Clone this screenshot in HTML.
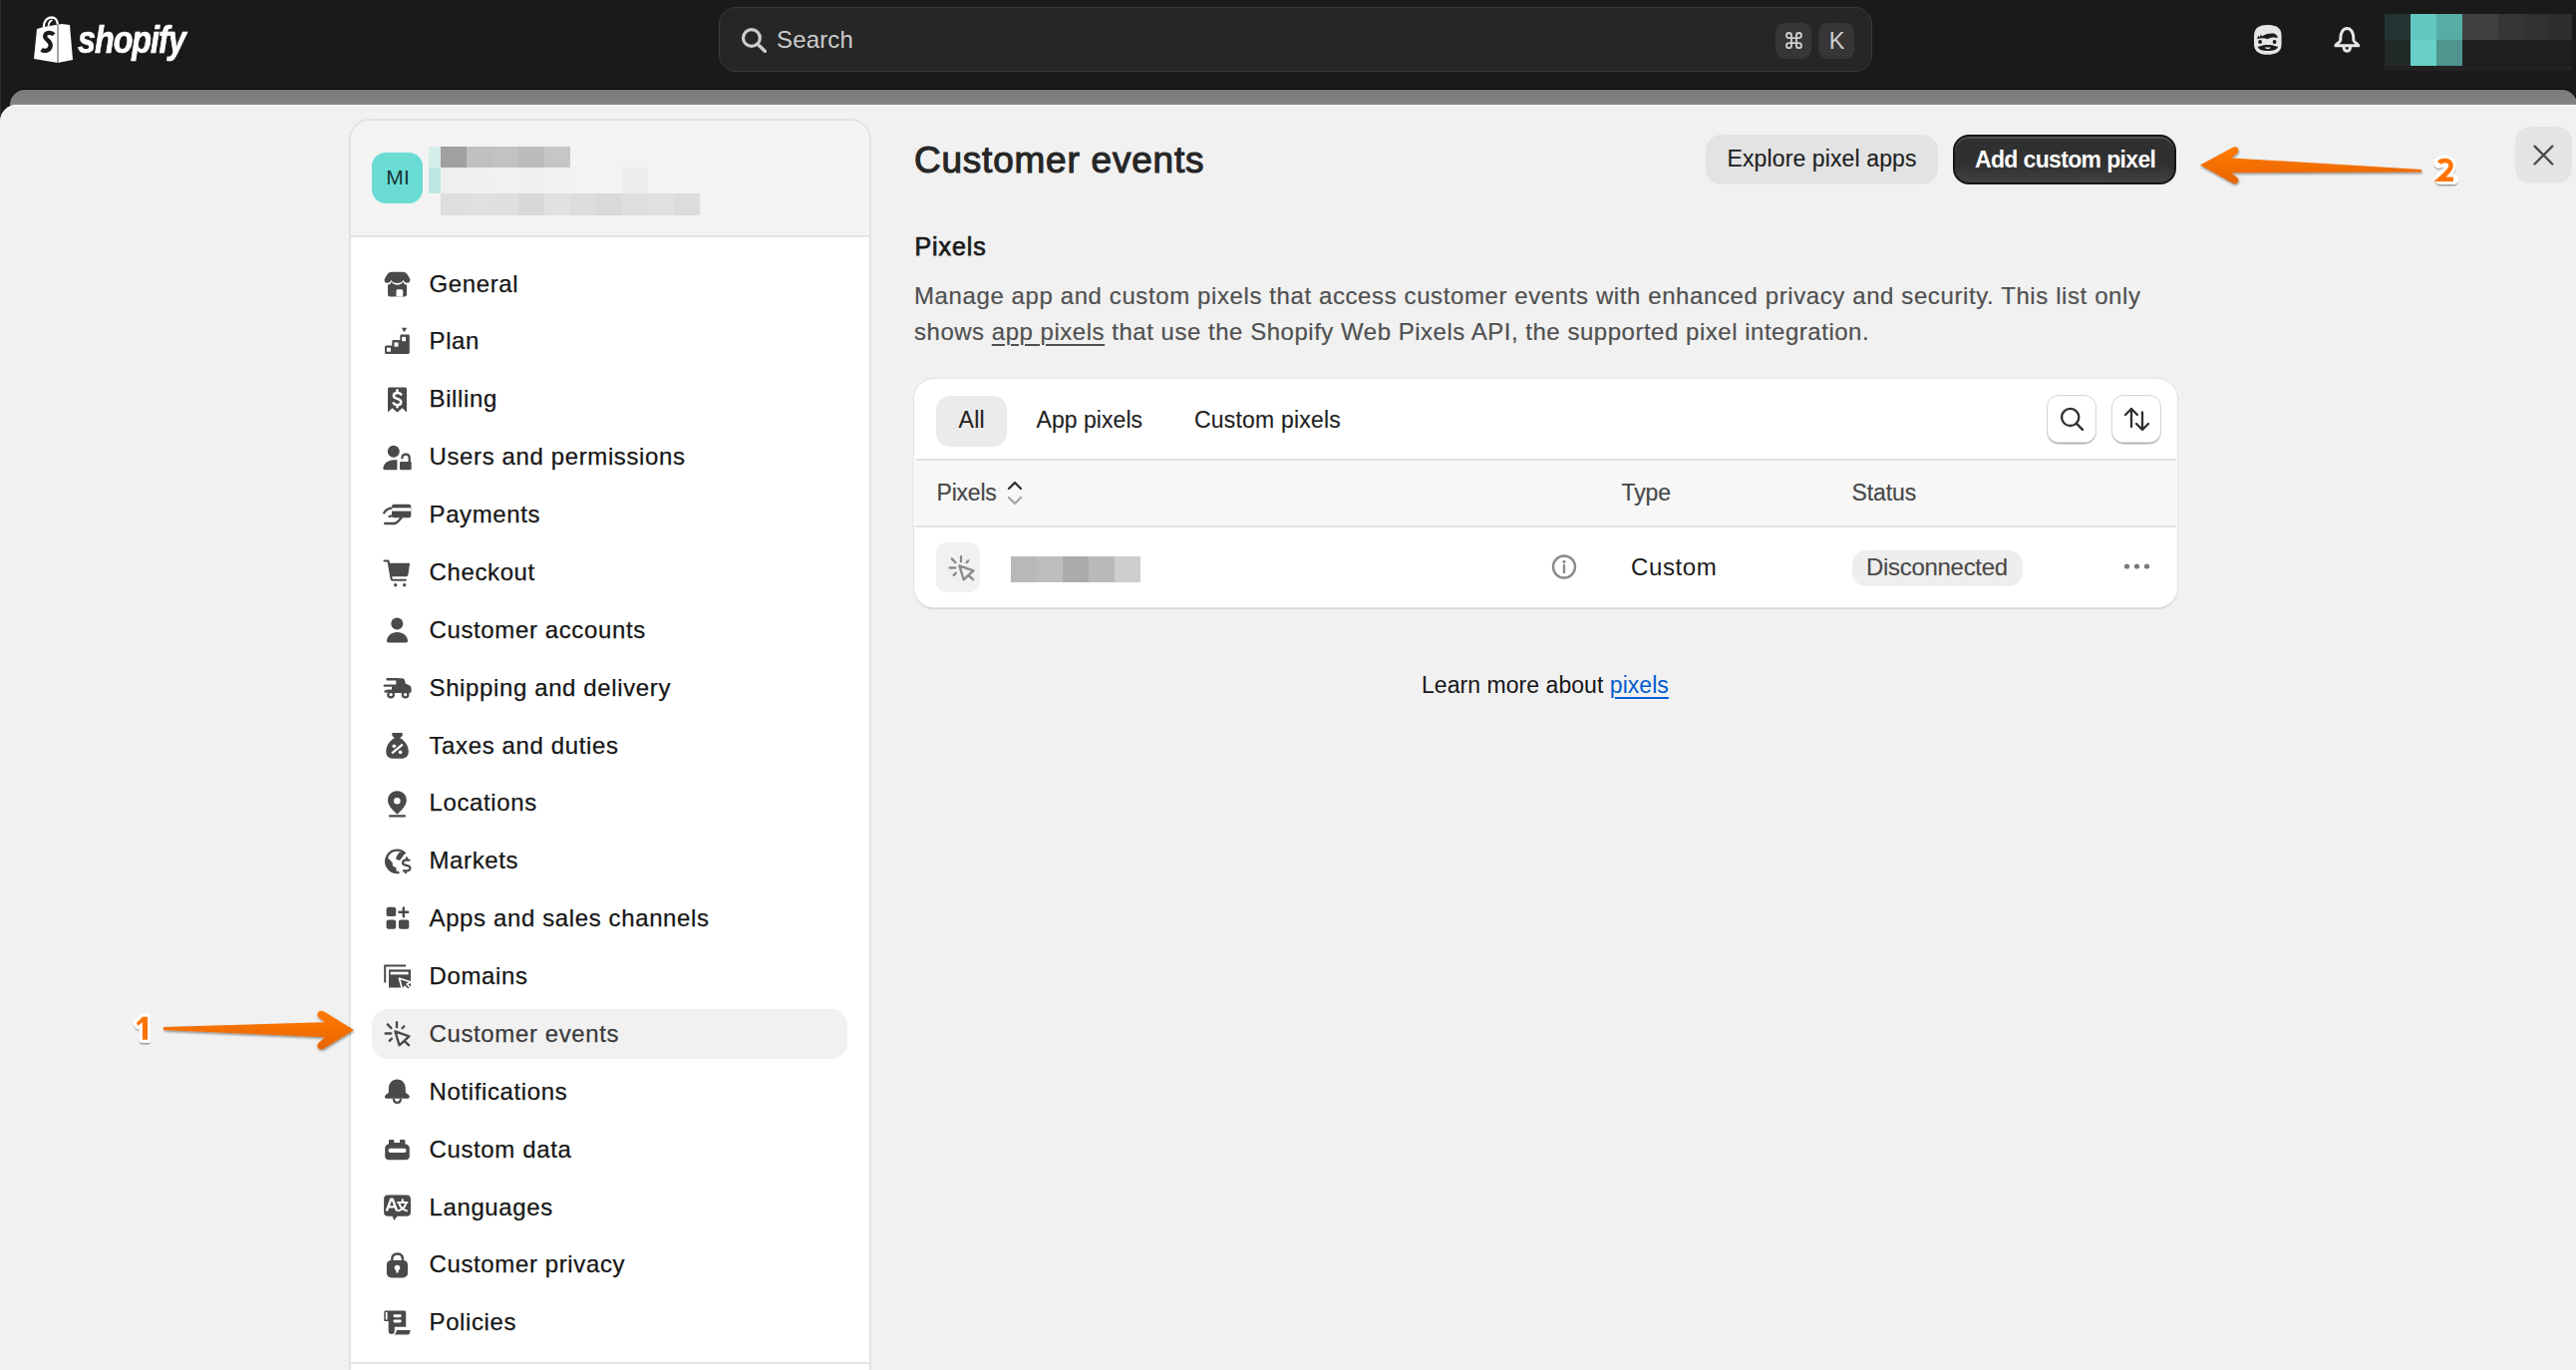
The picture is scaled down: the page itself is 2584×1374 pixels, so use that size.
<!DOCTYPE html>
<html><head><meta charset="utf-8"><title>Customer events</title>
<style>
*{margin:0;padding:0;box-sizing:border-box}
html,body{width:2584px;height:1374px;overflow:hidden;background:#f1f1f1}
body{position:relative;font-family:"Liberation Sans",sans-serif}
.t{position:absolute;white-space:nowrap}
.blk{position:absolute}
#topbar{position:absolute;left:0;top:0;width:2584px;height:130px;background:#1a1a1a}
#leftedge{position:absolute;left:0;top:0;width:1px;height:118px;background:#2c2c2c}
#search{position:absolute;left:721px;top:7px;width:1157px;height:65px;background:#262626;border:1.5px solid #3a3a3a;border-radius:17px}
.key{position:absolute;top:23px;width:36px;height:36px;background:#363636;border-radius:9px}
#band{position:absolute;left:10px;top:89.5px;width:2575px;height:20px;background:linear-gradient(#7a7a7a,#888888);border-radius:15px 15px 0 0;box-shadow:0 -1px 0 #050505}
#main{position:absolute;left:0;top:104.5px;width:2584px;height:1270px;background:#f1f1f1;border-radius:17px 0 0 0;box-shadow:inset 0 1.5px 0 #f6f6f6}
#side{position:absolute;left:350px;top:119px;width:524px;height:1300px;background:#fff;border:2px solid #e2e2e2;border-radius:21px}
#sidehead{position:absolute;left:352px;top:121px;width:520px;height:117px;background:#f3f3f3;border-bottom:2px solid #e3e3e3;border-radius:19px 19px 0 0}
#avatar{position:absolute;left:373px;top:153px;width:51px;height:51px;background:#6adcd4;border-radius:14px}
#selitem{position:absolute;left:373px;top:1012px;width:477px;height:50px;background:#f1f1f1;border-radius:16px}
.btn2{position:absolute;background:#e3e3e3;border-radius:16px}
.btn1{position:absolute;background:linear-gradient(#303030 0%,#303030 60%,#424242 100%);border:2px solid #161616;border-radius:16px;box-shadow:inset 0 2px 0 #505050}
.closebtn{position:absolute;left:2523px;top:127px;width:57px;height:57px;background:#e4e4e4;border-radius:15px}
#card{position:absolute;left:917px;top:380px;width:1267px;height:229px;background:#fff;border-radius:20px;box-shadow:0 0 0 1.2px #e4e4e4,0 2px 1px #d0d0d0}
.tabsel{position:absolute;left:939px;top:397px;width:71px;height:51px;background:#ebebeb;border-radius:14px}
.ibtn{position:absolute;top:396px;width:50px;height:49.5px;background:#fff;border:1.5px solid #d6d6d6;border-radius:12px;box-shadow:inset 0 -1.5px 0 #b5b5b5}
.hdrrow{position:absolute;left:918px;top:460px;width:1265px;height:69px;background:#f7f7f7;border-top:2px solid #e3e3e3;border-bottom:2px solid #e3e3e3}
.rowsep{display:none}
.rowicon{position:absolute;left:939px;top:543.5px;width:44px;height:50px;background:#f1f1f1;border-radius:10px}
.badge{position:absolute;left:1858px;top:552px;width:171px;height:36px;background:#eeeeee;border-radius:14px}
u.ul{text-decoration:underline;text-decoration-thickness:1.5px;text-underline-offset:4px}
u.lnk{color:#005bd3;text-decoration:underline;text-decoration-thickness:2px;text-underline-offset:4px}
.lbl{text-shadow:0 0 2px #fff,1.5px 0 0 #fff,-1.5px 0 0 #fff,0 1.5px 0 #fff,0 -1.5px 0 #fff,1.5px 1.5px 0 #fff,-1.5px -1.5px 0 #fff,1.5px -1.5px 0 #fff,-1.5px 1.5px 0 #fff,0 3px 1px rgba(0,0,0,.35);-webkit-text-stroke:0}
</style></head>
<body>
<div id="topbar"></div>
<div id="leftedge"></div>
<svg id="logo-bag" width="42" height="48" viewBox="0 0 42 48" style="position:absolute;left:32px;top:16px">
<path d="M11.8 11.5 C11.8 5 15.5 1.5 19.5 1.5 C23.5 1.5 25.8 4.5 25.8 8.5" stroke="#fff" stroke-width="2.3" fill="none"/>
<path d="M16.5 10 C17 6.5 18.5 4.5 20.5 4.5" stroke="#fff" stroke-width="1.8" fill="none"/>
<path d="M5 13 L12 11 L30 8 L38 9 L41 44 L26 47 L2 43 Z" fill="#fff"/>
<path d="M26 9 L26 47" stroke="#1a1a1a" stroke-width="0.8"/>
<path d="M22 18.8 C19.5 16.2 14.2 16.2 13.2 19.8 C12.2 23.6 19.2 24.8 18.7 29.8 C18.2 34.5 13 36.2 9.6 33.8" stroke="#1a1a1a" stroke-width="4.3" fill="none"/>
</svg>
<div class="t logo" style="left:77.50px;top:20.83px;font-size:38px;line-height:38px;color:#ffffff;font-weight:700;letter-spacing:-1.2px;font-style:italic;transform:scaleX(0.85);transform-origin:0 0;-webkit-text-stroke:0.7px #fff;">shopify</div>
<div id="search"></div>
<svg width="30" height="30" viewBox="0 0 30 30" style="position:absolute;left:739px;top:23px">
<circle cx="14.9" cy="15" r="8.4" stroke="#cccccc" stroke-width="3.2" fill="none"/>
<path d="M21 21.2 L28.5 28.4" stroke="#cccccc" stroke-width="3.4" stroke-linecap="round"/></svg>
<div class="t " style="left:779.00px;top:27.88px;font-size:24px;line-height:24px;color:#cccccc;font-weight:400;letter-spacing:0.15px;">Search</div>
<div class="key" style="left:1781px"></div>
<div class="key" style="left:1824px"></div>
<svg width="15" height="15.2" viewBox="3 3 18 18" preserveAspectRatio="none" style="position:absolute;left:1792px;top:32.7px;overflow:visible">
<path d="M18 3a3 3 0 0 0-3 3v12a3 3 0 0 0 3 3 3 3 0 0 0 3-3 3 3 0 0 0-3-3H6a3 3 0 0 0-3 3 3 3 0 0 0 3 3 3 3 0 0 0 3-3V6a3 3 0 0 0-3-3 3 3 0 0 0-3 3 3 3 0 0 0 3 3h12a3 3 0 0 0 3-3 3 3 0 0 0-3-3z" stroke="#cfcfcf" stroke-width="2.2" fill="none"/></svg>
<div class="t " style="left:1834.80px;top:29.81px;font-size:23.5px;line-height:23.5px;color:#cfcfcf;font-weight:400;letter-spacing:0px;">K</div>
<svg width="30" height="32" viewBox="0 0 30 32" style="position:absolute;left:2260px;top:24px">
<path d="M1 12 C1 4 6 0.9 14.8 0.9 C23.6 0.9 28.6 4 28.6 12 L28.6 20 C28.6 27.5 23.6 30.8 14.8 30.8 C6 30.8 1 27.5 1 20 Z" fill="#e6e6e6"/>
<path d="M3.9 15 L5.5 11.5 L6.5 13.5 L8 10.5 L9 12.5 C12 10 17 9 21 9.5 C23 10 24.5 12 25 14 C21 13 17.5 13.5 14.5 15.2 C12 14 8 14 3.9 15 Z" fill="#1a1a1a"/>
<circle cx="7.1" cy="18" r="1.9" fill="#1a1a1a"/><circle cx="21.6" cy="18" r="1.9" fill="#1a1a1a"/>
<path d="M4.75 23 C8 21.5 11.5 20.9 14.8 20.9 C18 20.9 21.5 21.5 25.1 23 C24 26 20 27 14.8 27 C9.5 27 5.8 26 4.75 23 Z" fill="#1a1a1a"/>
<path d="M11.8 23.5 C12.5 25.8 17 25.8 17.8 23.5 Z" fill="#e6e6e6"/>
</svg>
<svg width="30" height="30" viewBox="0 0 30 30" style="position:absolute;left:2340px;top:26px">
<path d="M7.8 12.5 C7.8 6.2 10.6 2.4 14.3 2.4 C18 2.4 20.8 6.2 20.8 12.5 L20.8 14.2 C20.8 16.6 25.8 17.6 25.8 19.8 L2.8 19.8 C2.8 17.6 7.8 16.6 7.8 14.2 Z" stroke="#e6e6e6" stroke-width="3" fill="none" stroke-linejoin="round"/>
<path d="M11 20.5 C11 26.8 17.6 26.8 17.6 20.5" stroke="#e6e6e6" stroke-width="3" fill="none"/>
</svg>
<div class="blk" style="left:2392px;top:14px;width:26px;height:26px;background:#243433"></div>
<div class="blk" style="left:2418px;top:14px;width:26px;height:26px;background:#64c8c0"></div>
<div class="blk" style="left:2444px;top:14px;width:26px;height:26px;background:#58aca6"></div>
<div class="blk" style="left:2470px;top:14px;width:36px;height:26px;background:#404040"></div>
<div class="blk" style="left:2506px;top:14px;width:26px;height:26px;background:#363636"></div>
<div class="blk" style="left:2532px;top:14px;width:26px;height:26px;background:#313131"></div>
<div class="blk" style="left:2558px;top:14px;width:22px;height:26px;background:#2e2e2e"></div>
<div class="blk" style="left:2392px;top:40px;width:26px;height:26px;background:#222a29"></div>
<div class="blk" style="left:2418px;top:40px;width:26px;height:26px;background:#68d0c8"></div>
<div class="blk" style="left:2444px;top:40px;width:26px;height:26px;background:#4f948e"></div>
<div class="blk" style="left:2470px;top:40px;width:110px;height:26px;background:#1e1e1e"></div>
<div class="blk" style="left:2392px;top:66px;width:188px;height:5px;background:#222222"></div>
<div id="band"></div>
<div id="main"></div>
<div id="side"></div>
<div id="sidehead"></div>
<div id="avatar"></div>
<div class="t " style="left:387.30px;top:167.42px;font-size:21px;line-height:21px;color:#163533;font-weight:400;letter-spacing:0.3px;">MI</div>
<div class="blk" style="left:430px;top:147px;width:12px;height:21px;background:#d6eeeb"></div>
<div class="blk" style="left:442px;top:147px;width:26px;height:21px;background:#a0a0a0"></div>
<div class="blk" style="left:468px;top:147px;width:26px;height:21px;background:#c0c0c0"></div>
<div class="blk" style="left:494px;top:147px;width:26px;height:21px;background:#c2c2c2"></div>
<div class="blk" style="left:520px;top:147px;width:26px;height:21px;background:#bcbcbc"></div>
<div class="blk" style="left:546px;top:147px;width:26px;height:21px;background:#c6c6c6"></div>
<div class="blk" style="left:430px;top:168px;width:12px;height:26px;background:#bce7e2"></div>
<div class="blk" style="left:442px;top:168px;width:26px;height:26px;background:#efefef"></div>
<div class="blk" style="left:468px;top:168px;width:26px;height:26px;background:#f0f0f0"></div>
<div class="blk" style="left:494px;top:168px;width:26px;height:26px;background:#f1f1f1"></div>
<div class="blk" style="left:520px;top:168px;width:26px;height:26px;background:#f0f0f0"></div>
<div class="blk" style="left:546px;top:168px;width:26px;height:26px;background:#f1f1f1"></div>
<div class="blk" style="left:624px;top:168px;width:26px;height:26px;background:#ececec"></div>
<div class="blk" style="left:442px;top:194px;width:26px;height:22px;background:#dedede"></div>
<div class="blk" style="left:468px;top:194px;width:26px;height:22px;background:#e0e0e0"></div>
<div class="blk" style="left:494px;top:194px;width:26px;height:22px;background:#dfdfdf"></div>
<div class="blk" style="left:520px;top:194px;width:26px;height:22px;background:#d8d8d8"></div>
<div class="blk" style="left:546px;top:194px;width:26px;height:22px;background:#e1e1e1"></div>
<div class="blk" style="left:572px;top:194px;width:26px;height:22px;background:#dddddd"></div>
<div class="blk" style="left:598px;top:194px;width:26px;height:22px;background:#d9d9d9"></div>
<div class="blk" style="left:624px;top:194px;width:26px;height:22px;background:#dedede"></div>
<div class="blk" style="left:650px;top:194px;width:26px;height:22px;background:#e0e0e0"></div>
<div class="blk" style="left:676px;top:194px;width:26px;height:22px;background:#dcdcdc"></div>
<div id="selitem"></div>
<svg width="30" height="30" viewBox="0 0 30 30" style="position:absolute;left:384px;top:270.90px;overflow:visible"><path d="M8.8 1.7 L20.2 1.7 C22.2 1.7 23.5 2.6 24.6 4.3 L27 8.3 C27.8 9.8 27.4 12.6 24.8 12.8 C22.9 12.9 21.3 11.8 20.5 9.8 C19.7 11.9 17.5 13 14.5 13 C11.5 13 9.3 11.9 8.5 9.8 C7.7 11.8 6.1 12.9 4.2 12.8 C1.6 12.6 1.2 9.8 2 8.3 L4.4 4.3 C5.5 2.6 6.8 1.7 8.8 1.7 Z" fill="#4a4a4a"/>
<path d="M5 14.5 C6.8 14.7 8 13.8 8.6 11.6 C10 14 12.2 14.8 14.5 14.8 C16.8 14.8 19 14 20.4 11.6 C21 13.8 22.2 14.7 24 14.5 L24 24.2 C24 25.6 23.2 26.4 21.8 26.4 L7.2 26.4 C5.8 26.4 5 25.6 5 24.2 Z" fill="#4a4a4a"/>
<path d="M13.5 20.8 C13.5 19.9 14.2 19.3 15 19.3 L18.7 19.3 C19.5 19.3 20.2 19.9 20.2 20.8 L20.2 26.4 L13.5 26.4 Z" fill="#fff"/></svg>
<div class="t " style="left:430.50px;top:272.58px;font-size:24px;line-height:24px;color:#161616;font-weight:400;letter-spacing:0.62px;-webkit-text-stroke:0.25px #161616;">General</div>
<svg width="30" height="30" viewBox="0 0 30 30" style="position:absolute;left:384px;top:328.77px;overflow:visible"><path d="M18.8 -0.2 L24.3 -0.2 L21.5 4.2 Z" fill="#4a4a4a"/>
<path d="M18.8 6.5 L25.3 6.5 C26.2 6.5 26.8 7.1 26.8 8 L26.8 24.4 C26.8 25.3 26.2 25.9 25.3 25.9 L3.5 25.9 C2.6 25.9 2 25.3 2 24.4 L2 19 C2 18.1 2.6 17.5 3.5 17.5 L9.3 17.5 L9.3 13.5 C9.3 12.6 9.9 12 10.8 12 L17.3 12 L17.3 8 C17.3 7.1 17.9 6.5 18.8 6.5 Z" fill="#4a4a4a"/>
<rect x="3.9" y="19.7" width="4" height="4" fill="#fff"/><rect x="11.5" y="14.4" width="4" height="4.3" fill="#fff"/><rect x="19.2" y="8.9" width="3.8" height="4.3" fill="#fff"/></svg>
<div class="t " style="left:430.50px;top:330.45px;font-size:24px;line-height:24px;color:#161616;font-weight:400;letter-spacing:0.62px;-webkit-text-stroke:0.25px #161616;">Plan</div>
<svg width="30" height="30" viewBox="0 0 30 30" style="position:absolute;left:384px;top:386.64px;overflow:visible"><path d="M6.5 1.6 L22.5 1.6 C23.4 1.6 24 2.2 24 3.1 L24 26.4 L19.5 22.2 L14.5 26.4 L9.5 22.2 L5 26.4 L5 3.1 C5 2.2 5.6 1.6 6.5 1.6 Z" fill="#4a4a4a"/>
<path d="M18.3 8.6 C17.5 7.5 16.2 7 14.6 7 C12.4 7 10.9 8.2 10.9 9.9 C10.9 13.6 18.3 12.2 18.3 16.2 C18.3 18 16.6 19.2 14.4 19.2 C12.7 19.2 11.4 18.5 10.6 17.2" stroke="#fff" stroke-width="2.5" fill="none" stroke-linecap="round"/>
<path d="M14.5 4.3 L14.5 7 M14.5 19.2 L14.5 21.3" stroke="#fff" stroke-width="2.5" stroke-linecap="round"/></svg>
<div class="t " style="left:430.50px;top:388.32px;font-size:24px;line-height:24px;color:#161616;font-weight:400;letter-spacing:0.62px;-webkit-text-stroke:0.25px #161616;">Billing</div>
<svg width="30" height="30" viewBox="0 0 30 30" style="position:absolute;left:384px;top:444.51px;overflow:visible"><circle cx="10.8" cy="7.7" r="6" fill="#4a4a4a"/>
<path d="M0.3 24.6 C1 19.5 5 16.4 11 16.2 L14.4 16.2 L14.4 26.3 L1.8 26.3 C0.9 26.3 0.2 25.6 0.3 24.6 Z" fill="#4a4a4a"/>
<rect x="17" y="17.9" width="11.7" height="8.4" rx="1.4" fill="#4a4a4a"/>
<path d="M19.4 14.3 C19.4 12 20.8 10.6 23 10.6 C25.2 10.6 26.7 12.1 26.7 14.4 L26.7 18.5" stroke="#4a4a4a" stroke-width="2.3" fill="none" stroke-linecap="round"/></svg>
<div class="t " style="left:430.50px;top:446.19px;font-size:24px;line-height:24px;color:#161616;font-weight:400;letter-spacing:0.62px;-webkit-text-stroke:0.25px #161616;">Users and permissions</div>
<svg width="30" height="30" viewBox="0 0 30 30" style="position:absolute;left:384px;top:502.38px;overflow:visible"><rect x="9" y="3.8" width="19.3" height="13.5" rx="2.2" fill="#4a4a4a"/>
<rect x="9" y="7.4" width="19.3" height="3.2" fill="#fff"/>
<path d="M1.2 12.4 C3 9.7 5.2 8 8.3 7.7" stroke="#4a4a4a" stroke-width="2.3" fill="none" stroke-linecap="round"/>
<path d="M6.5 16 C9.5 15 13 14.3 16.5 14.2" stroke="#4a4a4a" stroke-width="2.3" fill="none" stroke-linecap="round"/>
<path d="M2.2 23 L11.5 23 C13.8 23 15.8 20.5 18.5 17.2" stroke="#4a4a4a" stroke-width="2.4" fill="none" stroke-linecap="round"/></svg>
<div class="t " style="left:430.50px;top:504.06px;font-size:24px;line-height:24px;color:#161616;font-weight:400;letter-spacing:0.62px;-webkit-text-stroke:0.25px #161616;">Payments</div>
<svg width="30" height="30" viewBox="0 0 30 30" style="position:absolute;left:384px;top:560.25px;overflow:visible"><path d="M1.5 2.5 L5.5 2.5 L8.6 20.5 C8.7 21.3 9.3 21.7 10 21.7 L22.8 21.7" stroke="#4a4a4a" stroke-width="2.1" fill="none" stroke-linecap="round" stroke-linejoin="round"/>
<path d="M6.3 4.7 L26.3 4.7 C26.8 4.7 27.1 5.1 27 5.6 L25.4 16.2 C25.2 17.4 24.3 18.3 23 18.3 L8.3 18.3 Z" fill="#4a4a4a"/>
<circle cx="12.7" cy="26.7" r="1.7" fill="#4a4a4a"/><circle cx="21.7" cy="26.7" r="1.7" fill="#4a4a4a"/></svg>
<div class="t " style="left:430.50px;top:561.93px;font-size:24px;line-height:24px;color:#161616;font-weight:400;letter-spacing:0.62px;-webkit-text-stroke:0.25px #161616;">Checkout</div>
<svg width="30" height="30" viewBox="0 0 30 30" style="position:absolute;left:384px;top:618.12px;overflow:visible"><circle cx="14.3" cy="7.5" r="6" fill="#4a4a4a"/>
<path d="M4 24.6 C4.5 19.5 8.5 15.9 14.5 15.9 C20.5 15.9 24.5 19.5 25 24.6 C25.1 25.7 24.4 26.6 23.3 26.6 L5.7 26.6 C4.6 26.6 3.9 25.7 4 24.6 Z" fill="#4a4a4a"/></svg>
<div class="t " style="left:430.50px;top:619.80px;font-size:24px;line-height:24px;color:#161616;font-weight:400;letter-spacing:0.62px;-webkit-text-stroke:0.25px #161616;">Customer accounts</div>
<svg width="30" height="30" viewBox="0 0 30 30" style="position:absolute;left:384px;top:675.99px;overflow:visible"><path d="M13.3 4.2 L19.4 4.2 C20.8 4.2 21.6 5 22 6.5 L22.8 9.8 L25.5 10.8 C27.5 11.5 28.6 13 28.6 15 L28.6 17 C28.6 18.2 27.8 18.9 26.8 18.9 L9 18.9 L9 13.4 C9 12.6 9.6 12.2 10.4 12.2 L12.9 12.2 L13.3 11 Z" fill="#4a4a4a"/>
<path d="M4.5 5.2 L15 5.2 M1.8 11.6 L12.5 11.6 M2.6 17.6 C4 16.8 6 16.6 9.5 17" stroke="#4a4a4a" stroke-width="2.4" stroke-linecap="round" fill="none"/>
<circle cx="8.1" cy="20.6" r="2.8" fill="#fff" stroke="#4a4a4a" stroke-width="2.2"/><circle cx="22.6" cy="20.6" r="2.8" fill="#fff" stroke="#4a4a4a" stroke-width="2.2"/></svg>
<div class="t " style="left:430.50px;top:677.67px;font-size:24px;line-height:24px;color:#161616;font-weight:400;letter-spacing:0.62px;-webkit-text-stroke:0.25px #161616;">Shipping and delivery</div>
<svg width="30" height="30" viewBox="0 0 30 30" style="position:absolute;left:384px;top:733.86px;overflow:visible"><path d="M9.3 1 L19.7 1 L19.7 3.7 L17.2 6.2 C22.5 8.8 25.8 14.2 25.8 19.6 C25.8 24 23.5 26.7 19.5 26.7 L9.5 26.7 C5.5 26.7 3.3 24 3.3 19.6 C3.3 14.2 6.5 8.8 11.8 6.2 L9.3 3.7 Z" fill="#4a4a4a"/>
<path d="M9.8 20.8 L19.2 13.2" stroke="#fff" stroke-width="2.3" stroke-linecap="round"/>
<circle cx="11.3" cy="14.2" r="1.8" fill="#fff"/><circle cx="17.6" cy="20.4" r="1.8" fill="#fff"/></svg>
<div class="t " style="left:430.50px;top:735.54px;font-size:24px;line-height:24px;color:#161616;font-weight:400;letter-spacing:0.62px;-webkit-text-stroke:0.25px #161616;">Taxes and duties</div>
<svg width="30" height="30" viewBox="0 0 30 30" style="position:absolute;left:384px;top:791.73px;overflow:visible"><path d="M14.4 1.2 C19.8 1.2 23.8 5.2 23.8 10.6 C23.8 15.4 20 20 14.4 24.7 C8.8 20 5 15.4 5 10.6 C5 5.2 9 1.2 14.4 1.2 Z" fill="#4a4a4a"/>
<circle cx="14.3" cy="11.2" r="3.3" fill="#fff"/>
<rect x="6" y="25.2" width="17" height="2.3" rx="1" fill="#4a4a4a"/></svg>
<div class="t " style="left:430.50px;top:793.41px;font-size:24px;line-height:24px;color:#161616;font-weight:400;letter-spacing:0.62px;-webkit-text-stroke:0.25px #161616;">Locations</div>
<svg width="30" height="30" viewBox="0 0 30 30" style="position:absolute;left:384px;top:849.60px;overflow:visible"><defs><clipPath id="globeclip"><circle cx="14.4" cy="13.8" r="12.2"/></clipPath></defs>
<path d="M16.33 24.73 A11.1 11.1 0 1 1 22.52 6.23" stroke="#4a4a4a" stroke-width="2.4" fill="none"/>
<path clip-path="url(#globeclip)" d="M0 6 L4.3 9.6 L9.7 15.3 L10 18.8 L13.2 19.9 L13.8 24.3 L16.8 25.6 L16.8 30 L0 30 Z" fill="#4a4a4a"/>
<path d="M16.4 5 L21.1 3.9 L22.2 6.1 L17 12.9 L13.2 11.8 C13 10 14.5 7 16.4 5 Z" fill="#4a4a4a"/>
<path d="M27.4 12.6 L23.2 12.6 C21.2 12.6 20 13.7 20 15.3 C20 16.9 21.3 17.7 23.4 17.9 C25.8 18.1 27.4 19 27.4 20.7 C27.4 22.4 25.9 23.4 23.2 23.4 L20 23.4 M23.9 9.4 L23.9 12.6 M23 23.4 L23 26" stroke="#4a4a4a" stroke-width="2.2" fill="none"/></svg>
<div class="t " style="left:430.50px;top:851.28px;font-size:24px;line-height:24px;color:#161616;font-weight:400;letter-spacing:0.62px;-webkit-text-stroke:0.25px #161616;">Markets</div>
<svg width="30" height="30" viewBox="0 0 30 30" style="position:absolute;left:384px;top:907.47px;overflow:visible"><rect x="3.6" y="2.8" width="9.6" height="9.3" rx="2.2" fill="#4a4a4a"/>
<rect x="3.6" y="15.4" width="9.6" height="9.3" rx="2.2" fill="#4a4a4a"/>
<rect x="15.9" y="15.4" width="10.4" height="9.3" rx="2.2" fill="#4a4a4a"/>
<path d="M20.8 3.4 L20.8 12.2 M16.4 7.8 L25.2 7.8" stroke="#4a4a4a" stroke-width="2.4" stroke-linecap="round"/></svg>
<div class="t " style="left:430.50px;top:909.15px;font-size:24px;line-height:24px;color:#161616;font-weight:400;letter-spacing:0.62px;-webkit-text-stroke:0.25px #161616;">Apps and sales channels</div>
<svg width="30" height="30" viewBox="0 0 30 30" style="position:absolute;left:384px;top:965.34px;overflow:visible"><path d="M2.2 20.5 L2.2 3.4 L23 3.4" stroke="#4a4a4a" stroke-width="2" fill="none"/>
<rect x="6" y="7.4" width="22" height="18.1" fill="#4a4a4a"/>
<rect x="7.6" y="9.7" width="18" height="2.7" fill="#fff"/>
<path d="M16.5 16.2 L28.5 20 L24.2 22 L27.6 25.6 L25.3 27.9 L21.9 24.4 L19.8 28.5 Z" fill="#4a4a4a" stroke="#fff" stroke-width="1.7" stroke-linejoin="round"/></svg>
<div class="t " style="left:430.50px;top:967.02px;font-size:24px;line-height:24px;color:#161616;font-weight:400;letter-spacing:0.62px;-webkit-text-stroke:0.25px #161616;">Domains</div>
<svg width="30" height="30" viewBox="0 0 30 30" style="position:absolute;left:384px;top:1023.21px;overflow:visible"><path d="M14 2.1 L14 7.3 M4.8 4.4 L8.4 8.1 M21.3 6.3 L19.5 8.2 M2.6 13.5 L8.3 13.5 M6.7 20.9 L8.9 18.6" stroke="#4a4a4a" stroke-width="2.3" stroke-linecap="round"/>
<path d="M12.4 11.4 L26.4 16.3 L16.6 25.3 Z M21.5 20.8 L26.2 25.3" stroke="#4a4a4a" stroke-width="2.3" fill="none" stroke-linejoin="round" stroke-linecap="round"/></svg>
<div class="t " style="left:430.50px;top:1024.89px;font-size:24px;line-height:24px;color:#3a3a3a;font-weight:400;letter-spacing:0.62px;-webkit-text-stroke:0.25px #3a3a3a;">Customer events</div>
<svg width="30" height="30" viewBox="0 0 30 30" style="position:absolute;left:384px;top:1081.08px;overflow:visible"><path d="M14.4 1.6 C19.5 1.6 22.8 5.6 22.8 10.8 L22.8 14 C22.8 15.8 26.8 16.6 26.8 19 C26.8 20 26 20.7 24.8 20.7 L3.9 20.7 C2.7 20.7 1.9 20 1.9 19 C1.9 16.6 5.9 15.8 5.9 14 L5.9 10.8 C5.9 5.6 9.2 1.6 14.4 1.6 Z" fill="#4a4a4a"/>
<path d="M10.9 21 C10.9 26.2 17.9 26.2 17.9 21" stroke="#4a4a4a" stroke-width="2.2" fill="none"/></svg>
<div class="t " style="left:430.50px;top:1082.76px;font-size:24px;line-height:24px;color:#161616;font-weight:400;letter-spacing:0.62px;-webkit-text-stroke:0.25px #161616;">Notifications</div>
<svg width="30" height="30" viewBox="0 0 30 30" style="position:absolute;left:384px;top:1138.95px;overflow:visible"><path d="M6 8.3 L6 5 C6 4.4 6.4 4 7 4 L10.3 4 C10.9 4 11.3 4.4 11.3 5 L11.3 7 L17 7 L17 5 C17 4.4 17.4 4 18 4 L21.4 4 C22 4 22.4 4.4 22.4 5 L22.4 8.3 C25 8.6 26.8 10.3 26.8 12.8 L26.8 20.7 C26.8 22.8 25.2 24.2 23 24.2 L6 24.2 C3.8 24.2 2.2 22.8 2.2 20.7 L2.2 12.8 C2.2 10.3 4 8.6 6 8.3 Z" fill="#4a4a4a"/>
<rect x="5.5" y="12.8" width="18" height="4.2" rx="2" fill="#fff"/></svg>
<div class="t " style="left:430.50px;top:1140.63px;font-size:24px;line-height:24px;color:#161616;font-weight:400;letter-spacing:0.62px;-webkit-text-stroke:0.25px #161616;">Custom data</div>
<svg width="30" height="30" viewBox="0 0 30 30" style="position:absolute;left:384px;top:1196.82px;overflow:visible"><path d="M5 1.4 L24 1.4 C26.5 1.4 28 2.9 28 5.4 L28 18.7 C28 21.2 26.5 22.7 24 22.7 L14.5 22.7 L11.3 27 L9.5 22.7 L5 22.7 C2.5 22.7 1.1 21.2 1.1 18.7 L1.1 5.4 C1.1 2.9 2.5 1.4 5 1.4 Z" fill="#4a4a4a"/>
<path d="M3.8 17.5 L8.2 5.8 L9.8 5.8 L14.2 17.5 M5.8 13.4 L12.2 13.4" stroke="#fff" stroke-width="2.4" fill="none" stroke-linejoin="round"/>
<path d="M14.3 9 L25.3 9 M19.8 5.5 L19.8 9 M16.3 9.5 C17.3 13.8 20.2 16.5 24.8 17.6 M23.3 9.5 C22.3 13.8 19.4 16.5 14.8 17.6" stroke="#fff" stroke-width="2" fill="none"/></svg>
<div class="t " style="left:430.50px;top:1198.50px;font-size:24px;line-height:24px;color:#161616;font-weight:400;letter-spacing:0.62px;-webkit-text-stroke:0.25px #161616;">Languages</div>
<svg width="30" height="30" viewBox="0 0 30 30" style="position:absolute;left:384px;top:1254.69px;overflow:visible"><path d="M9.3 10.5 L9.3 7.8 C9.3 4.3 11.5 2.5 14.6 2.5 C17.7 2.5 19.9 4.3 19.9 7.8 L19.9 10.5" stroke="#4a4a4a" stroke-width="2.4" fill="none"/>
<rect x="3.9" y="8.9" width="21.1" height="17.5" rx="4.5" fill="#4a4a4a"/>
<path d="M14.5 13.8 C16.2 13.8 17.4 15 17.4 16.6 C17.4 17.7 16.8 18.6 15.8 19.1 L15.6 21.5 L13.4 21.5 L13.2 19.1 C12.2 18.6 11.6 17.7 11.6 16.6 C11.6 15 12.8 13.8 14.5 13.8 Z" fill="#fff"/></svg>
<div class="t " style="left:430.50px;top:1256.37px;font-size:24px;line-height:24px;color:#161616;font-weight:400;letter-spacing:0.62px;-webkit-text-stroke:0.25px #161616;">Customer privacy</div>
<svg width="30" height="30" viewBox="0 0 30 30" style="position:absolute;left:384px;top:1312.56px;overflow:visible"><path d="M3 1.4 L21.5 1.4 C22.5 1.4 23.2 2.1 23.2 3.1 L23.2 17.8 L11.8 17.8 L11.8 22.3 C11.8 24 10.5 25 8.8 25 C7 25 5.7 24 5.7 22.3 L5.7 12 L1.3 12 L1.3 3.1 C1.3 2.1 2 1.4 3 1.4 Z" fill="#4a4a4a"/>
<rect x="2.8" y="3" width="1.8" height="7.5" fill="#fff"/>
<rect x="10.5" y="5.3" width="8.2" height="2.9" rx="1.4" fill="#fff"/><rect x="10.5" y="10.5" width="8.2" height="2.9" rx="1.4" fill="#fff"/>
<path d="M13.5 20.5 L28.3 20.5 L27.7 23.8 C27.4 25.3 26.5 26.2 25 26.2 L9.8 26.2 C11.8 25.2 13 23.3 13.5 20.5 Z" fill="#4a4a4a" stroke="#fff" stroke-width="1.2"/></svg>
<div class="t " style="left:430.50px;top:1314.24px;font-size:24px;line-height:24px;color:#161616;font-weight:400;letter-spacing:0.62px;-webkit-text-stroke:0.25px #161616;">Policies</div>
<div style="position:absolute;left:352px;top:1366px;width:520px;height:2px;background:#e3e3e3"></div>
<div class="t " style="left:917.00px;top:141.58px;font-size:37px;line-height:37px;color:#262626;font-weight:400;letter-spacing:0.77px;-webkit-text-stroke:1.1px #262626;">Customer events</div>
<div class="btn2" style="left:1711px;top:135px;width:233px;height:50px"></div>
<div class="t " style="left:1732.50px;top:148.13px;font-size:23px;line-height:23px;color:#1f1f1f;font-weight:400;letter-spacing:0.12px;-webkit-text-stroke:0.15px #1f1f1f;">Explore pixel apps</div>
<div class="btn1" style="left:1959px;top:135px;width:224px;height:50px"></div>
<div class="t " style="left:1981.00px;top:149.13px;font-size:23px;line-height:23px;color:#ffffff;font-weight:700;letter-spacing:-0.65px;">Add custom pixel</div>
<div class="closebtn"></div>
<svg width="30" height="30" viewBox="0 0 30 30" style="position:absolute;left:2537px;top:141px">
<path d="M5.5 5.7 L23.3 23.5 M23.3 5.7 L5.5 23.5" stroke="#4a4a4a" stroke-width="2.4" stroke-linecap="round"/></svg>
<div class="t " style="left:917.50px;top:234.84px;font-size:25px;line-height:25px;color:#1c1c1c;font-weight:400;letter-spacing:0.9px;-webkit-text-stroke:0.75px #1c1c1c;">Pixels</div>
<div class="t " style="left:917.00px;top:285.38px;font-size:24px;line-height:24px;color:#505050;font-weight:400;letter-spacing:0.6px;-webkit-text-stroke:0.2px #505050;">Manage app and custom pixels that access customer events with enhanced privacy and security. This list only</div>
<div class="t " style="left:917.00px;top:321.48px;font-size:24px;line-height:24px;color:#505050;font-weight:400;letter-spacing:0.52px;-webkit-text-stroke:0.2px #505050;">shows <u class="ul">app pixels</u> that use the Shopify Web Pixels API, the supported pixel integration.</div>
<div id="card"></div>
<div class="tabsel"></div>
<div class="t " style="left:961.50px;top:410.13px;font-size:23px;line-height:23px;color:#1f1f1f;font-weight:400;letter-spacing:0.3px;-webkit-text-stroke:0.15px #1f1f1f;">All</div>
<div class="t " style="left:1039.50px;top:410.13px;font-size:23px;line-height:23px;color:#1f1f1f;font-weight:400;letter-spacing:0.05px;-webkit-text-stroke:0.15px #1f1f1f;">App pixels</div>
<div class="t " style="left:1198.00px;top:410.13px;font-size:23px;line-height:23px;color:#1f1f1f;font-weight:400;letter-spacing:0.19px;-webkit-text-stroke:0.15px #1f1f1f;">Custom pixels</div>
<div class="ibtn" style="left:2053px"></div><div class="ibtn" style="left:2118px"></div>
<svg width="30" height="30" viewBox="0 0 30 30" style="position:absolute;left:2062px;top:404px">
<circle cx="14.7" cy="14.4" r="8.6" stroke="#303030" stroke-width="2.3" fill="none"/>
<path d="M21 20.8 L27 26.8" stroke="#303030" stroke-width="2.4" stroke-linecap="round"/></svg>
<svg width="30" height="30" viewBox="0 0 30 30" style="position:absolute;left:2128px;top:404px">
<path d="M10 6 L10 24 M4 12 L10 6 L16 12" stroke="#303030" stroke-width="2.3" fill="none" stroke-linecap="round" stroke-linejoin="round"/>
<path d="M21 9.5 L21 27 M15 21 L21 27 L27 21" stroke="#303030" stroke-width="2.3" fill="none" stroke-linecap="round" stroke-linejoin="round"/></svg>
<div class="hdrrow"></div>
<div class="t " style="left:939.50px;top:482.73px;font-size:23px;line-height:23px;color:#484848;font-weight:400;letter-spacing:-0.2px;-webkit-text-stroke:0.2px #484848;">Pixels</div>
<svg width="20" height="30" viewBox="0 0 20 30" style="position:absolute;left:1008px;top:480px">
<path d="M4 10 L10 4 L16 10" stroke="#303030" stroke-width="2.3" fill="none" stroke-linecap="round" stroke-linejoin="round"/>
<path d="M4 19 L10 25 L16 19" stroke="#a8a8a8" stroke-width="2.3" fill="none" stroke-linecap="round" stroke-linejoin="round"/></svg>
<div class="t " style="left:1626.50px;top:482.73px;font-size:23px;line-height:23px;color:#484848;font-weight:400;letter-spacing:-0.1px;-webkit-text-stroke:0.2px #484848;">Type</div>
<div class="t " style="left:1857.50px;top:482.73px;font-size:23px;line-height:23px;color:#484848;font-weight:400;letter-spacing:-0.1px;-webkit-text-stroke:0.2px #484848;">Status</div>
<div class="rowsep"></div>
<div class="rowicon"></div>
<svg width="30" height="30" viewBox="0 0 30 30" style="position:absolute;left:950px;top:555.5px">
<path d="M14 2.1 L14 7.3 M4.8 4.4 L8.4 8.1 M21.3 6.3 L19.5 8.2 M2.6 13.5 L8.3 13.5 M6.7 20.9 L8.9 18.6" stroke="#8a8a8a" stroke-width="2.3" stroke-linecap="round"/>
<path d="M12.4 11.4 L26.4 16.3 L16.6 25.3 Z M21.5 20.8 L26.2 25.3" stroke="#8a8a8a" stroke-width="2.3" fill="none" stroke-linejoin="round" stroke-linecap="round"/></svg>
<div class="blk" style="left:1014px;top:558px;width:26px;height:26px;background:#b8b8b8"></div>
<div class="blk" style="left:1040px;top:558px;width:26px;height:26px;background:#bdbdbd"></div>
<div class="blk" style="left:1066px;top:558px;width:26px;height:26px;background:#ababab"></div>
<div class="blk" style="left:1092px;top:558px;width:26px;height:26px;background:#b9b9b9"></div>
<div class="blk" style="left:1118px;top:558px;width:26px;height:26px;background:#cecece"></div>
<svg width="30" height="30" viewBox="0 0 30 30" style="position:absolute;left:1554px;top:554px">
<circle cx="15" cy="14.5" r="11" stroke="#8a8a8a" stroke-width="2.4" fill="none"/>
<circle cx="15" cy="9.3" r="1.6" fill="#8a8a8a"/>
<path d="M15 13 L15 20" stroke="#8a8a8a" stroke-width="2.4" stroke-linecap="round"/></svg>
<div class="t " style="left:1636.00px;top:557.08px;font-size:24px;line-height:24px;color:#1a1a1a;font-weight:400;letter-spacing:0.6px;">Custom</div>
<div class="badge"></div>
<div class="t " style="left:1872.00px;top:557.08px;font-size:24px;line-height:24px;color:#4a4a4a;font-weight:400;letter-spacing:-0.3px;-webkit-text-stroke:0.15px #4a4a4a;">Disconnected</div>
<svg width="34" height="12" viewBox="0 0 34 12" style="position:absolute;left:2126px;top:562px">
<circle cx="7.5" cy="6" r="2.6" fill="#7a7a7a"/><circle cx="17.5" cy="6" r="2.6" fill="#7a7a7a"/><circle cx="27.5" cy="6" r="2.6" fill="#7a7a7a"/></svg>
<div class="t " style="left:1426.00px;top:675.73px;font-size:23px;line-height:23px;color:#161616;font-weight:400;letter-spacing:0.05px;">Learn more about <u class="lnk">pixels</u></div>
<svg width="2584" height="1374" viewBox="0 0 2584 1374" style="position:absolute;left:0;top:0;pointer-events:none">
<defs>
<linearGradient id="og" x1="0" y1="0" x2="0" y2="1"><stop offset="0" stop-color="#ff7a00"/><stop offset="1" stop-color="#e86400"/></linearGradient>
<filter id="sh" x="-5%" y="-50%" width="110%" height="200%"><feDropShadow dx="0.5" dy="1.5" stdDeviation="0.8" flood-color="#000" flood-opacity="0.45"/></filter>
</defs>
<g filter="url(#sh)">
<path d="M164 1030 L326 1025.3 L320 1020.5 C316 1017 320 1011.5 325 1014.5 L355 1033 L325 1051.5 C320 1054.5 316 1049 320 1045.5 L326 1040.2 L164 1033 Z" fill="url(#og)"/>
<path d="M2429 170 L2238 158.5 L2244 153.5 C2247.5 150.5 2244 145.5 2239.5 148 L2207 165.5 L2239.5 183.5 C2244 186 2247.5 181 2244 178 L2238 173.3 L2429 172.5 Z" fill="url(#og)"/>
</g>
</svg>
<svg width="2584" height="1374" viewBox="0 0 2584 1374" style="position:absolute;left:0;top:0">
<defs><filter id="sh2" x="-50%" y="-50%" width="200%" height="200%"><feDropShadow dx="0" dy="1.5" stdDeviation="0.7" flood-color="#000" flood-opacity="0.35"/></filter></defs>
<g filter="url(#sh2)">
<path d="M136.8 1026.1 L143.2 1019.8 L148 1019.8 L148 1042.8 L142.9 1042.8 L142.9 1025.2 L138.5 1028.7 Z" fill="#ffffff" stroke="#ffffff" stroke-width="6.5" stroke-linejoin="round"/>
<path d="M2446.6 163.4 C2448.4 161.2 2450.6 161 2452.6 161 C2456.3 161 2458.6 163.1 2458.6 166.2 C2458.6 169.3 2456.3 171.8 2447.5 179.8 L2460.9 179.8" fill="#ffffff" stroke="#ffffff" stroke-width="10.5" stroke-linejoin="round" stroke-linecap="round"/>
</g>
<path d="M136.8 1026.1 L143.2 1019.8 L148 1019.8 L148 1042.8 L142.9 1042.8 L142.9 1025.2 L138.5 1028.7 Z" fill="#ff7300"/>
<path d="M2446.6 163.4 C2448.4 161.2 2450.6 161 2452.6 161 C2456.3 161 2458.6 163.1 2458.6 166.2 C2458.6 169.3 2456.3 171.8 2447.5 179.8 L2460.9 179.8" fill="none" stroke="#ff7300" stroke-width="4.6" stroke-linejoin="miter"/>
</g></svg>
</body></html>
